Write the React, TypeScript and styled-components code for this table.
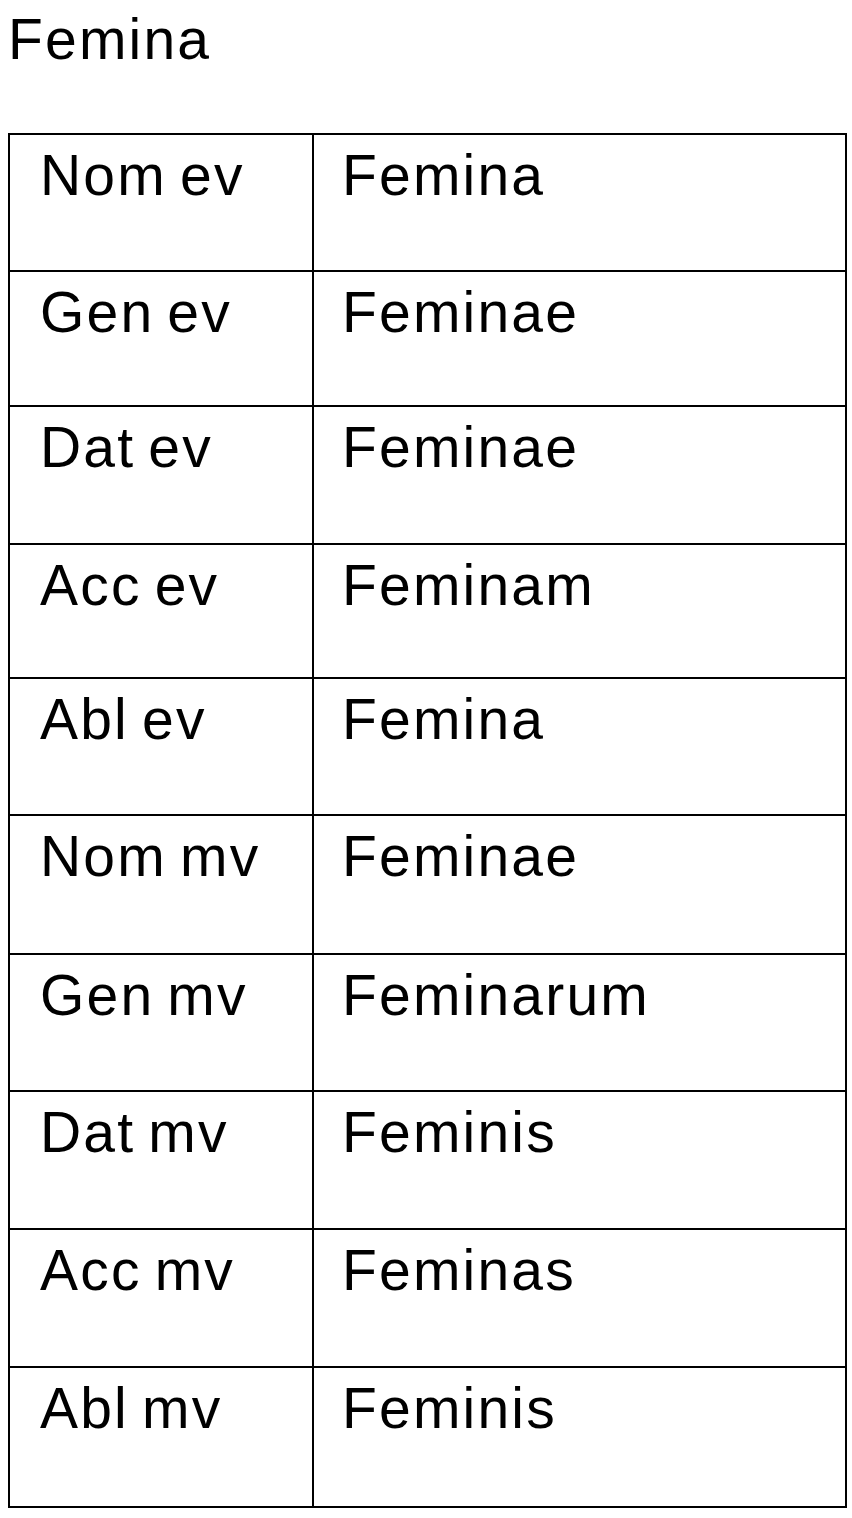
import React from "react";
import styled, { createGlobalStyle } from "styled-components";

const GlobalStyle = createGlobalStyle`
  body {
    margin: 0;
    background: #fff;
    color: #000;
    font-family: "Liberation Sans", Arial, sans-serif;
  }
`;

const Page = styled.div`
  padding: 7px 0 0 8px;
`;

const Title = styled.h1`
  margin: 0;
  font-size: 57px;
  font-weight: 400;
  line-height: 65px;
  letter-spacing: 2.2px;
`;

const Table = styled.div`
  margin-top: 61px;
  width: 839px;
  box-sizing: border-box;
  border: 2px solid #000;
`;

const Row = styled.div<{ $h: number }>`
  display: grid;
  grid-template-columns: 302px 1fr;
  height: ${(p) => p.$h}px;
  box-sizing: border-box;
  & + & {
    border-top: 2px solid #000;
  }
`;

const Cell = styled.div<{ $divider?: boolean }>`
  padding: 8px 0 0 ${(p) => (p.$divider ? "28px" : "30px")};
  border-left: ${(p) => (p.$divider ? "2px solid #000" : "none")};
  font-size: 57px;
  line-height: 65px;
  letter-spacing: 2.2px;
  word-spacing: -5px;
  white-space: nowrap;
`;

// row heights measured from the original document (line to line)
const forms: [string, string, number][] = [
  ["Nom ev", "Femina", 135],
  ["Gen ev", "Feminae", 135],
  ["Dat ev", "Feminae", 138],
  ["Acc ev", "Feminam", 134],
  ["Abl ev", "Femina", 137],
  ["Nom mv", "Feminae", 139],
  ["Gen mv", "Feminarum", 137],
  ["Dat mv", "Feminis", 138],
  ["Acc mv", "Feminas", 138],
  ["Abl mv", "Feminis", 140],
];

export default function App() {
  return (
    <Page>
      <GlobalStyle />
      <Title>Femina</Title>
      <Table>
        {forms.map(([kasus, form, h]) => (
          <Row key={kasus} $h={h}>
            <Cell>{kasus}</Cell>
            <Cell $divider>{form}</Cell>
          </Row>
        ))}
      </Table>
    </Page>
  );
}
